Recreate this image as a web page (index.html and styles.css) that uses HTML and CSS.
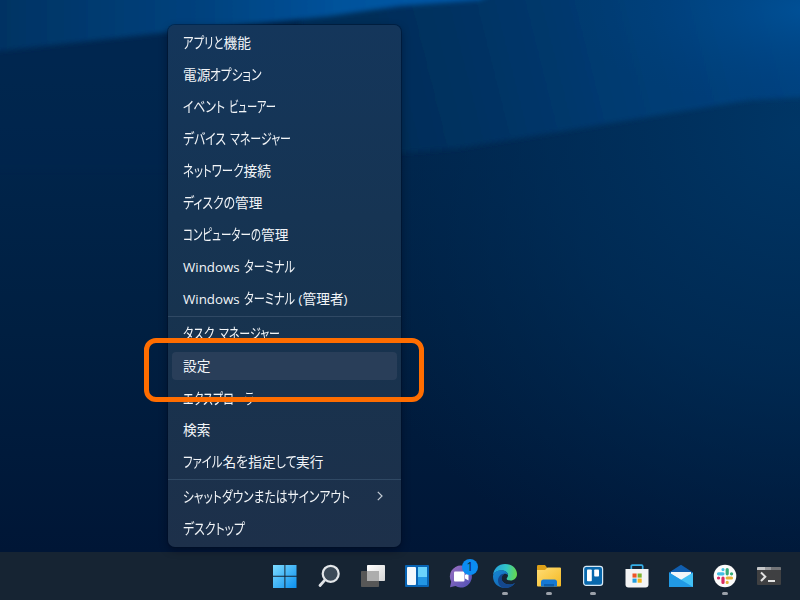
FILE: index.html
```html
<!DOCTYPE html>
<html lang="ja">
<head>
  <meta charset="UTF-8">
  <meta name="viewport" content="width=device-width, initial-scale=1.0">
  <title>Windows</title>
  <link rel="stylesheet" href="styles.css">
</head>
<body>
  <div class="desktop">
    <svg class="wallpaper" viewBox="0 0 800 552" preserveAspectRatio="none">
      <defs>
        <linearGradient id="base" x1="0" y1="0" x2="0" y2="1">
          <stop offset="0" stop-color="#002852"/>
          <stop offset=".3" stop-color="#00244a"/>
          <stop offset=".6" stop-color="#001f41"/>
          <stop offset="1" stop-color="#001636"/>
        </linearGradient>
        <linearGradient id="beam" gradientUnits="userSpaceOnUse" x1="0" y1="0" x2="450" y2="0">
          <stop offset="0" stop-color="#003363"/>
          <stop offset=".45" stop-color="#00427e"/>
          <stop offset=".75" stop-color="#00529b"/>
          <stop offset="1" stop-color="#0058a8"/>
        </linearGradient>
        <linearGradient id="upper" gradientUnits="userSpaceOnUse" x1="400" y1="120" x2="800" y2="20">
          <stop offset="0" stop-color="#002d59"/>
          <stop offset=".5" stop-color="#003a70"/>
          <stop offset="1" stop-color="#004382"/>
        </linearGradient>
        <radialGradient id="glow" gradientUnits="userSpaceOnUse" cx="0" cy="0" r="1" gradientTransform="translate(810 10) scale(240 100)">
          <stop offset="0" stop-color="#00549c" stop-opacity=".8"/>
          <stop offset="1" stop-color="#00407c" stop-opacity="0"/>
        </radialGradient>
        <radialGradient id="mid" gradientUnits="userSpaceOnUse" cx="0" cy="0" r="1" gradientTransform="translate(800 130) scale(500 480)">
          <stop offset="0" stop-color="#003869" stop-opacity=".9"/>
          <stop offset=".5" stop-color="#002f5b" stop-opacity=".65"/>
          <stop offset="1" stop-color="#002850" stop-opacity="0"/>
        </radialGradient>
        <filter id="soft" x="-10%" y="-20%" width="120%" height="140%"><feGaussianBlur stdDeviation="2.5"/></filter>
      </defs>
      <rect width="800" height="552" fill="url(#base)"/>
      <rect width="800" height="552" fill="url(#mid)"/>
      <path d="M300 -20H840V95L750 100L600 125L460 148L400 153H300Z" fill="url(#upper)" filter="url(#soft)"/>
      <rect x="500" width="300" height="150" fill="url(#glow)"/>
      <path d="M-20 20H300V170H-20Z" fill="#002550" filter="url(#soft)" opacity=".4"/>
      <path d="M-20 -20H520L480 0L400 6L330 16L170 32L0 51L-20 53Z" fill="url(#beam)" filter="url(#soft)"/>
    </svg>

    <div class="menu">
      <div class="item"><span class="kana" data-width="40.5">アプリと</span>機能</div>
      <div class="item">電源<span class="kana" data-width="51.5">オプション</span></div>
      <div class="item"><span class="kana" data-width="42">イベント</span><span class="space"></span><span class="kana" data-width="47">ビューアー</span></div>
      <div class="item"><span class="kana" data-width="43">デバイス</span><span class="space"></span><span class="kana" data-width="61">マネージャー</span></div>
      <div class="item"><span class="kana" data-width="60.5">ネットワーク</span>接続</div>
      <div class="item"><span class="kana" data-width="52">ディスクの</span>管理</div>
      <div class="item"><span class="kana" data-width="78">コンピューターの</span>管理</div>
      <div class="item"><span class="latin">Windows</span><span class="space"></span><span class="kana" data-width="51">ターミナル</span></div>
      <div class="item"><span class="latin">Windows</span><span class="space"></span><span class="kana" data-width="51">ターミナル</span><span class="space"></span><span class="latin">(</span>管理者<span class="latin">)</span></div>
      <div class="separator"></div>
      <div class="item"><span class="kana" data-width="31.5">タスク</span><span class="space"></span><span class="kana" data-width="61">マネージャー</span></div>
      <div class="item active">設定</div>
      <div class="item"><span class="kana" data-width="82">エクスプローラー</span></div>
      <div class="item">検索</div>
      <div class="item"><span class="kana" data-width="39.5">ファイル</span>名<span class="kana" data-width="12">を</span>指定<span class="kana" data-width="20.5">して</span>実行</div>
      <div class="separator"></div>
      <div class="item"><span class="kana" data-width="167">シャットダウンまたはサインアウト</span>
        <svg class="chevron" width="6" height="10" viewBox="0 0 6 10"><path d="M.8 .8L5 5L.8 9.2"/></svg>
      </div>
      <div class="item"><span class="kana" data-width="62">デスクトップ</span></div>
    </div>

    <div class="marker"></div>
  </div>

  <div class="taskbar">
    <!-- Start -->
    <div class="app">
      <svg viewBox="0 0 24 24">
        <defs><linearGradient id="start" gradientUnits="userSpaceOnUse" x1="0" y1="0" x2="24" y2="24"><stop offset="0" stop-color="#7fdcff"/><stop offset="1" stop-color="#0a8fee"/></linearGradient></defs>
        <path d="M0 1h11.4v10.8H0zM12.4 1H23.5v10.8H12.4zM0 12.8h11.4V24H0zM12.4 12.8H23.5V24H12.4z" fill="url(#start)"/>
      </svg>
    </div>
    <!-- Search -->
    <div class="app">
      <svg viewBox="0 0 24 24">
        <circle cx="13.7" cy="9.8" r="8" fill="#3c4a58" stroke="#e4e7ea" stroke-width="2.2"/>
        <path d="M8 15.8L3 21.5" stroke="#dfe2e6" stroke-width="2.8" stroke-linecap="round"/>
      </svg>
    </div>
    <!-- Task view -->
    <div class="app">
      <svg viewBox="0 0 24 24">
        <defs><linearGradient id="view" x1="0" y1="0" x2="1" y2="1"><stop offset="0" stop-color="#ffffff"/><stop offset="1" stop-color="#d5d5d5"/></linearGradient></defs>
        <rect x="6" y="1" width="18" height="16" rx=".8" fill="url(#view)"/>
        <rect x="0" y="7" width="18" height="16" rx=".8" fill="#575757"/>
        <path d="M6 7h12v10H6z" fill="#adadad"/>
      </svg>
    </div>
    <!-- Widgets -->
    <div class="app">
      <svg viewBox="0 0 24 24">
        <rect x="0" y="1" width="24" height="22" rx="1" fill="#0864b4"/>
        <rect x="2" y="3" width="9" height="18" rx="1" fill="#f4f8fc"/>
        <path d="M13 3h9v10H13z" fill="#6bd2fb"/>
        <path d="M13 13h9v8H13z" fill="#2396e3"/>
      </svg>
    </div>
    <!-- Chat -->
    <div class="app">
      <svg viewBox="0 0 24 24">
        <defs><linearGradient id="chat" x1="0" y1="0" x2="1" y2="1"><stop offset="0" stop-color="#9b6fc0"/><stop offset="1" stop-color="#4f50b5"/></linearGradient></defs>
        <path d="M12 1.5a11 11 0 1 1-5.5 20.6L1 23.2l1.2-5.4A11 11 0 0 1 12 1.5z" fill="url(#chat)"/>
        <rect x="5" y="7.5" width="10.5" height="10" rx="1" fill="#fff"/>
        <path d="M16 11l3.5-2v7.5l-3.5-2z" fill="#fff"/>
      </svg>
      <span class="badge">1</span>
    </div>
    <!-- Edge -->
    <div class="app running">
      <svg viewBox="0 0 24 24">
        <defs>
          <linearGradient id="edgeTop" x1="0" y1=".3" x2="1" y2=".4"><stop offset="0" stop-color="#249de0"/><stop offset=".55" stop-color="#31c5c5"/><stop offset="1" stop-color="#65d84e"/></linearGradient>
          <linearGradient id="edgeLow" x1="0" y1="0" x2="1" y2="1"><stop offset="0" stop-color="#1687d3"/><stop offset="1" stop-color="#125ba9"/></linearGradient>
        </defs>
        <path d="M0 11C.8 4.5 5.5 0 12 0c7 0 12 4.6 12 10 0 4-3 6.5-6.5 6.5-2.5 0-4-1-3.8-2 .2-.8 1.3-1.3 1.3-3.3C15 8.5 12 6.6 8.5 6.6 4.5 6.6 1.5 8.4 0 11z" fill="url(#edgeTop)"/>
        <path d="M0 12.5C0 8.5 4 6.2 8.4 6.2c3.9 0 6.6 2.2 6.6 5-1-1-2.5-1.7-4-1.2-3 1-3.6 4.8-1.5 7.6 2.6 3.4 8 3.8 12.5 1.3C19.7 22.2 16 24 12 24 5 24 0 19 0 12.5z" fill="url(#edgeLow)"/>
        <path d="M9 23.6C4.8 21 3.8 15.5 6.5 12.2 8 10.4 9.8 9.7 11.3 9.9 8.8 11.2 7.9 14.6 9.5 17.6c2.6 3.6 8.5 3.8 12.5 1.3C19 22.9 14 25 9 23.6z" fill="#14478d"/>
      </svg>
    </div>
    <!-- Explorer -->
    <div class="app running">
      <svg viewBox="0 0 24 24">
        <defs><linearGradient id="folder" x1="0" y1="0" x2="1" y2="1"><stop offset="0" stop-color="#ffdd75"/><stop offset="1" stop-color="#f4b923"/></linearGradient></defs>
        <path d="M0 2.2Q0 1 1.2 1H8l2 2.5V8H0z" fill="#dda018"/>
        <path d="M0 6h8l2.5-2.5H23Q24 3.5 24 4.5V21.5Q24 22.5 23 22.5H1Q0 22.5 0 21.5z" fill="url(#folder)"/>
        <path d="M4 22.5V18q0-2.5 2.5-2.5h11Q20 15.5 20 18v4.5z" fill="#1679d3"/>
        <path d="M7 20h10v2.5H7z" fill="#0d5eab"/>
      </svg>
    </div>
    <!-- Trello -->
    <div class="app running">
      <svg viewBox="0 0 24 24">
        <rect x="2.6" y="2.4" width="19" height="19" rx="2.6" fill="#0868ad" stroke="#d8e9f5" stroke-width="1.2"/>
        <rect x="6" y="5.5" width="4.8" height="11.8" rx=".8" fill="#fff"/>
        <rect x="13.2" y="5.5" width="4.8" height="7" rx=".8" fill="#fff"/>
      </svg>
    </div>
    <!-- Store -->
    <div class="app">
      <svg viewBox="0 0 24 24">
        <path d="M6.3 6V2.3Q6.3 1.2 7.4 1.2h9.2q1.1 0 1.1 1.1V6" fill="none" stroke="#35aee8" stroke-width="1.7"/>
        <path d="M.5 5h23v15.5q0 3-3 3h-17q-3 0-3-3z" fill="#f3f4f5"/>
        <path d="M7.5 9.5h4.1v4.1H7.5z" fill="#ed5527"/><path d="M12.6 9.5h4.1v4.1h-4.1z" fill="#7cb32d"/>
        <path d="M7.5 14.6h4.1v4.1H7.5z" fill="#219fe0"/><path d="M12.6 14.6h4.1v4.1h-4.1z" fill="#f4b41c"/>
      </svg>
    </div>
    <!-- Mail -->
    <div class="app">
      <svg viewBox="0 0 24 24">
        <path d="M0 8.5L12 .8L24 8.5V13H0z" fill="#105eaf"/>
        <path d="M2 8h20v6L12 18L2 14z" fill="#f2f6f9"/>
        <path d="M0 8.5L12 16L0 23z" fill="#2daaeb"/>
        <path d="M24 8.5L10 17L0 23H24z" fill="#43c1f5"/>
        <path d="M0 8.5L24 23H0z" fill="#2199e4"/>
      </svg>
    </div>
    <!-- Slack -->
    <div class="app running">
      <svg viewBox="0 0 24 24">
        <circle cx="12" cy="12" r="11.3" fill="#fcfcfc"/>
        <g fill="none" stroke-width="3.2" stroke-linecap="round">
          <path d="M10 5.5v.1M5.5 9.8H10" stroke="#42bfe5"/>
          <path d="M14.2 5.5v4.3M18.5 9.8h.1" stroke="#35ac78"/>
          <path d="M14.2 14h4.3M14.2 18.4v.1" stroke="#e8b238"/>
          <path d="M10 14v4.5M5.5 14h.1" stroke="#da2c62"/>
        </g>
      </svg>
    </div>
    <!-- Terminal -->
    <div class="app">
      <svg viewBox="0 0 24 24">
        <rect x="0" y="3" width="24" height="18" rx="1" fill="#3f4042"/>
        <path d="M0 6V4q0-1 1-1h13v3z" fill="#c4c6c8"/><path d="M8 3h6v3H8z" fill="#999b9e"/><path d="M14 3h9q1 0 1 1v2H14z" fill="#727477"/>
        <path d="M4 8.5l4.3 4.2L4 17" fill="none" stroke="#e1e1e1" stroke-width="2"/>
        <path d="M11 17h7" stroke="#fff" stroke-width="1.7"/>
      </svg>
    </div>
  </div>

  <script>
    // The UI font has narrow kana: squeeze each run to its advance width
    document.querySelectorAll('.kana').forEach(function (run) {
      const width = parseFloat(run.dataset.width);
      const natural = run.getBoundingClientRect().width;
      run.style.width = width + 'px';
      run.style.transform = `scaleX(${width / natural})`;
    });
  </script>
</body>
</html>
```
FILE: styles.css
```css
body {
  margin: 0;
  width: 800px;
  height: 600px;
  overflow: hidden;
  background: #001a3b;
  color: #f2f5f8;
  font-family: "Open Sans", "Noto Sans CJK JP", sans-serif;
  display: flex;
  flex-direction: column;
}

.desktop {
  position: relative;
  box-sizing: border-box;
  height: 552px;
  padding: 25px 0 0 168px;
}

.wallpaper {
  position: absolute;
  top: 0;
  left: 0;
  width: 100%;
  height: 100%;
}

.menu {
  position: relative;
  box-sizing: border-box;
  width: 233px;
  height: 522px;
  padding: 1px 0;
  border-radius: 7px;
  background: linear-gradient(#14365b, #17334f 55%, #1d304a);
  box-shadow: 0 0 0 1px rgba(0, 14, 35, 0.4), 0 3px 9px rgba(0, 5, 20, 0.45);
}

.item {
  box-sizing: border-box;
  height: 28px;
  margin: 2px 4px 4px;
  padding: 0 11px;
  border-radius: 4px;
  display: flex;
  align-items: center;
  font-family: "Noto Sans CJK JP", sans-serif;
  font-size: 13.7px;
  line-height: 26px;
  white-space: nowrap;
}

.item + .item {
  margin-top: 4px;
}

.separator + .item {
  margin-top: 3px;
}

.separator ~ .item {
  padding-bottom: 2px;
}

.separator ~ .active + .item {
  padding-bottom: 0;
}

.active {
  background: #293e59;
}

.kana {
  display: inline-block;
  flex: none;
  transform-origin: left center;
  font-size: 15px;
  font-feature-settings: "palt";
}

.latin {
  font-family: "Open Sans", sans-serif;
  font-size: 13.3px;
  padding-top: 1px;
}

.space {
  width: 4px;
}

.separator {
  height: 1px;
  margin: 1px 0;
  background: #304964;
}

.separator ~ .separator {
  margin: -1px 0 1px;
}

.chevron {
  margin-left: auto;
  margin-right: 3px;
  fill: none;
  stroke: #c4ccd5;
  stroke-width: 1.2;
}

.marker {
  position: absolute;
  box-sizing: border-box;
  left: 144px;
  top: 338px;
  width: 280px;
  height: 64px;
  border: 5px solid #ff6d00;
  border-radius: 12px;
}

.taskbar {
  box-sizing: border-box;
  height: 48px;
  padding: 12px 0 0 273px;
  background: #162433;
  display: flex;
  gap: 20px;
}

.app {
  position: relative;
  flex: none;
  width: 24px;
  height: 24px;
}

.app svg {
  display: block;
  width: 24px;
  height: 24px;
}

.running::after {
  content: "";
  position: absolute;
  left: 9px;
  top: 28px;
  width: 6px;
  height: 3px;
  border-radius: 2px;
  background: #9ba1aa;
}

.badge {
  position: absolute;
  left: 13px;
  top: -5px;
  width: 16px;
  height: 16px;
  border-radius: 50%;
  background: #0b8cf2;
  color: #0c2542;
  font-size: 12px;
  line-height: 16px;
  text-align: center;
}
```
